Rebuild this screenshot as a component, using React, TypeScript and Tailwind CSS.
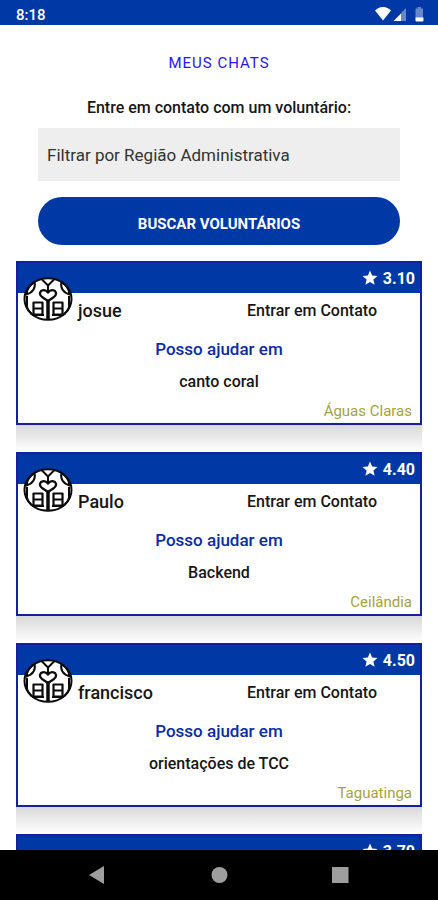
import { MdStar } from 'react-icons/md';

const volunteers = [
  { name: 'josue', rating: '3.10', skill: 'canto coral', region: 'Águas Claras' },
  { name: 'Paulo', rating: '4.40', skill: 'Backend', region: 'Ceilândia' },
  { name: 'francisco', rating: '4.50', skill: 'orientações de TCC', region: 'Taguatinga' },
  { name: '', rating: '3.70', skill: '', region: '' },
];

function StatusBar() {
  return (
    <div className="flex h-[25px] shrink-0 items-center justify-between bg-[#0038a5] pt-1 pr-3 pl-4 text-white">
      <span className="text-[15px] leading-5 font-medium">8:18</span>
      <svg width="52" height="18" viewBox="0 0 52 18" fill="#fff" aria-hidden="true">
        <path d="M1 4.500 Q2 3.500 4 2.300 Q9 -.2 14 2.300 Q16 3.500 17 4.500 L9 14.500Z" />
        <path d="M32 2V15H27V7Z" opacity=".4" />
        <path d="M27 7.500V15H19.500Z" />
        <path d="M41.500 2.500H43.500V1H47V2.500H49V12H41.500V2.500Z" opacity=".4" />
        <path d="M41.500 11.500H49.500V14.500Q49.500 15.500 48.500 15.500H42.500Q41.500 15.500 41.500 14.500Z" />
      </svg>
    </div>
  );
}

function Avatar() {
  return (
    <svg className="-mt-[18px] shrink-0" width="50" height="44" viewBox="0 0 50 44" fill="none" stroke="#0b0b0b" strokeWidth="2" strokeLinejoin="round" aria-hidden="true">
      <ellipse cx="25" cy="22" rx="23.500" ry="20.800" fill="#fff" />
      {/* collar */}
      <path d="M18.500 2 L25 8.500 L31.500 2 M25 8 V15" />
      {/* shoulders */}
      <path d="M11.500 5 Q13.500 14 3.500 17.500 Q4 10 11.500 5Z" />
      <path d="M38.500 5 Q36.500 14 46.500 17.500 Q46 10 38.500 5Z" />
      {/* heart */}
      <path d="M25 24 L19 20 Q15.500 17 18 14 Q22 11.500 25 15.500 Q28 11.500 32 14 Q34.500 17 31 20Z" strokeWidth="2.200" />
      <path d="M25 24V43" strokeWidth="3.500" />
      {/* pockets */}
      <path d="M10.500 37.500V25.500H19.500V37.500Z M10.500 31.500H19.500" strokeWidth="2.200" />
      <path d="M30.500 37.500V25.500H39.500V37.500Z M30.500 31.500H39.500" strokeWidth="2.200" />
      <path d="M4 19V30Q5 34 9 37.500 M46 19V30Q45 34 41 37.500" />
      <path d="M9 38H21 M29 38H41" />
    </svg>
  );
}

function VolunteerCard({ name, rating, skill, region }: (typeof volunteers)[number]) {
  return (
    <li>
      <div className="border-2 border-[#1420a0] bg-white pb-0.5">
        <div className="flex h-[30px] items-center justify-end gap-1 bg-[#0038a5] pr-[5px] text-white">
          <MdStar size={18} />
          <span className="pt-0.5 text-base leading-5 font-bold">{rating}</span>
        </div>
        <div className="flex h-7 items-end pr-[43px] pl-[5px]">
          <Avatar />
          <h2 className="pl-[5px] text-lg leading-5 font-medium">{name}</h2>
          <button type="button" className="ml-auto text-base leading-5 font-medium">Entrar em Contato</button>
        </div>
        <p className="mt-[18px] text-center text-[17px] leading-5 font-medium text-[#0a2ca5]">Posso ajudar em</p>
        <p className="mt-[13px] text-center text-base leading-5 font-medium">{skill}</p>
        <p className="mt-[9px] pr-2 text-right text-[15px] leading-5 text-[#a5a33c]">{region}</p>
      </div>
      {/* shadow cast in the gap below the card */}
      <div className="h-[27px] bg-linear-to-b from-black/15 to-black/0" />
    </li>
  );
}

function NavBar() {
  return (
    <nav className="flex h-[50px] shrink-0 items-center justify-center gap-[97px] bg-black text-[#9e9e9e]">
      <button type="button" aria-label="Voltar">
        <svg width="24" height="24" viewBox="0 0 24 24" fill="currentColor"><path d="M3 12L18 3V21Z" /></svg>
      </button>
      <button type="button" aria-label="Início">
        <svg width="24" height="24" viewBox="0 0 24 24" fill="currentColor"><circle cx="12.500" cy="12" r="8" /></svg>
      </button>
      <button type="button" aria-label="Recentes">
        <svg width="24" height="24" viewBox="0 0 24 24" fill="currentColor"><path d="M4 4H20.500V20H4Z" /></svg>
      </button>
    </nav>
  );
}

export default function App() {
  return (
    <div className="flex h-screen flex-col overflow-hidden bg-white font-['Roboto',sans-serif] text-[#161616]">
      <StatusBar />
      <main className="min-h-0 flex-1 overflow-hidden px-4">
        <h1 className="pt-7 text-center text-[15px] leading-5 tracking-[1px] text-[#2a14ee]">MEUS CHATS</h1>
        <form className="px-[22px]">
          <label htmlFor="region" className="mt-[25px] block text-center text-base leading-5 font-medium">
            Entre em contato com um voluntário:
          </label>
          <input
            id="region"
            type="text"
            placeholder="Filtrar por Região Administrativa"
            className="mt-2.5 block h-[53px] w-full bg-[#eeeeee] px-[9px] pt-px text-[17px] placeholder:text-[#333333]"
          />
          <button type="button" className="mt-4 block h-12 w-full rounded-3xl bg-[#0038a5] pt-1.5 text-[15px] font-bold text-white">
            BUSCAR VOLUNTÁRIOS
          </button>
        </form>
        <ul className="mt-4">
          {volunteers.map((v) => (
            <VolunteerCard key={v.rating} {...v} />
          ))}
        </ul>
      </main>
      <NavBar />
    </div>
  );
}
